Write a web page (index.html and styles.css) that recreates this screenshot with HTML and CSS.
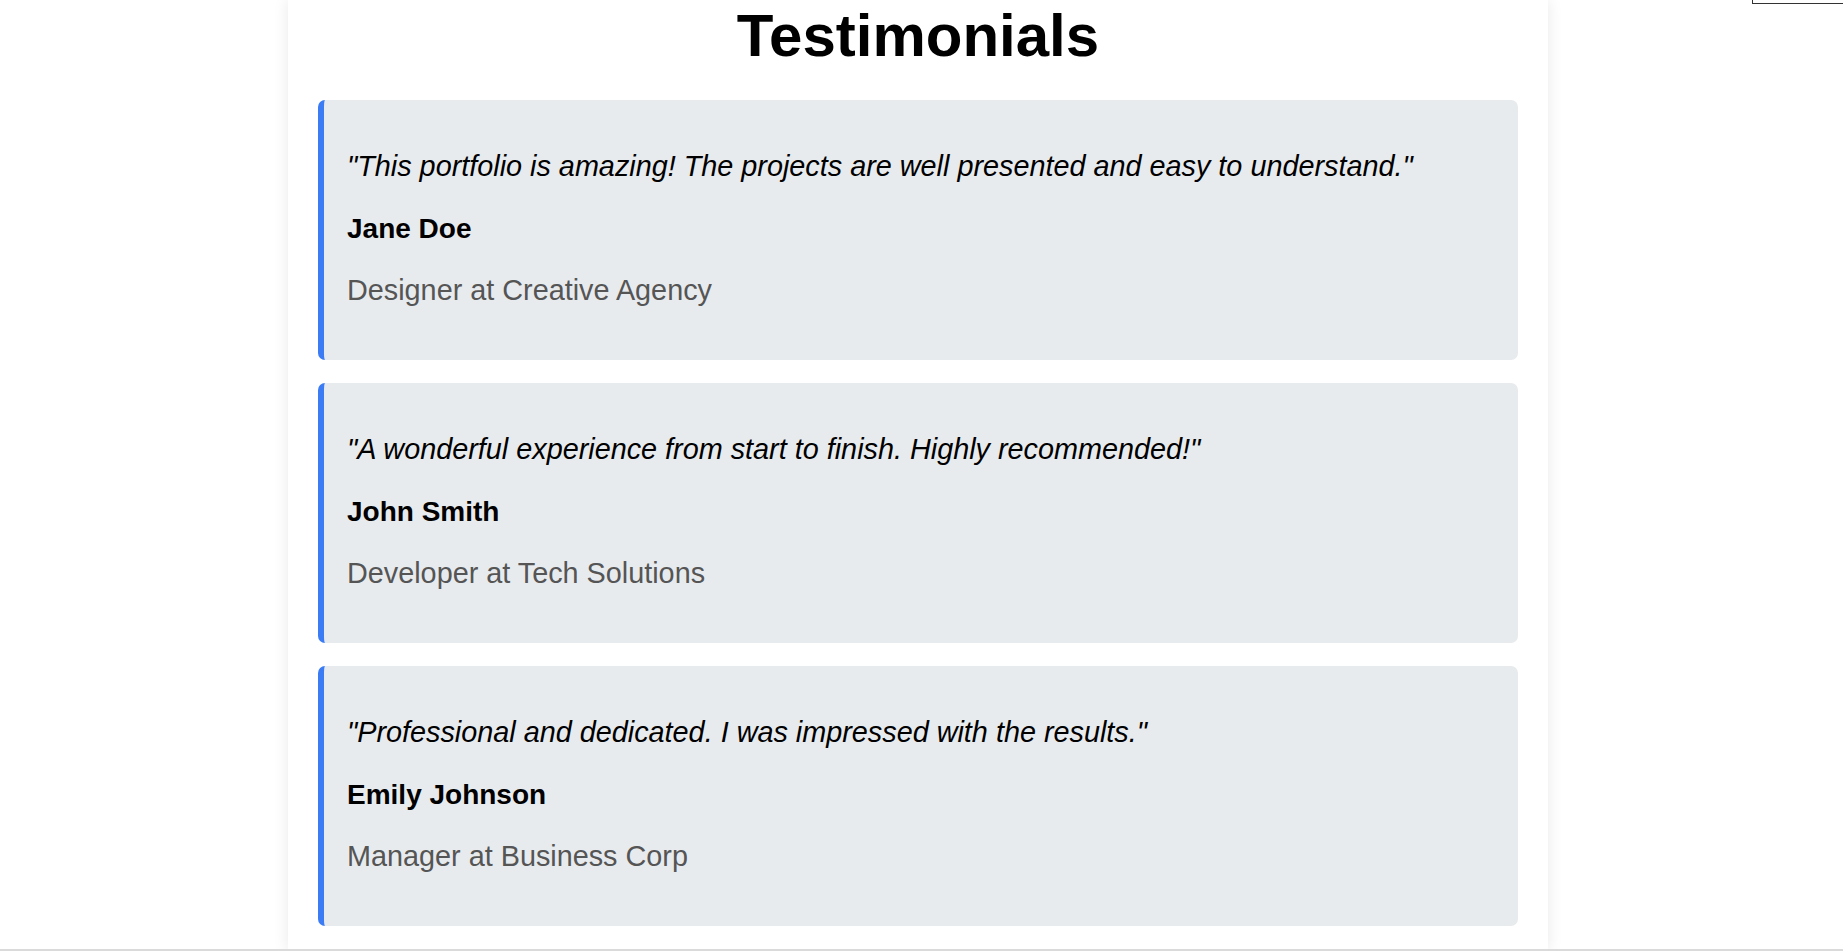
FILE: index.html
```html
<!DOCTYPE html>
<html lang="en">
<head>
<meta charset="utf-8">
<title>Testimonials</title>
<link rel="stylesheet" href="styles.css">
</head>
<body>
  <div class="corner-box"></div>
  <main class="page">
    <section class="testimonials">
      <h2 class="title">Testimonials</h2>
      <div class="list">
        <article class="card">
          <p class="quote">"This portfolio is amazing! The projects are well presented and easy to understand."</p>
          <h4 class="name">Jane Doe</h4>
          <p class="role">Designer at Creative Agency</p>
        </article>
        <article class="card">
          <p class="quote">"A wonderful experience from start to finish. Highly recommended!"</p>
          <h4 class="name">John Smith</h4>
          <p class="role">Developer at Tech Solutions</p>
        </article>
        <article class="card">
          <p class="quote">"Professional and dedicated. I was impressed with the results."</p>
          <h4 class="name">Emily Johnson</h4>
          <p class="role">Manager at Business Corp</p>
        </article>
      </div>
    </section>
  </main>
  <div class="bottom-edge"></div>
</body>
</html>
```

FILE: styles.css
```css
html, body {
  margin: 0;
  padding: 0;
  background: #ffffff;
  overflow: hidden;
}

body {
  padding-right: 7px;
  font-family: "Liberation Sans", Arial, sans-serif;
  color: #000;
  height: 951px;
}

.page {
  width: 1260px;
  height: 951px;
  margin: 0 auto;
  background: #ffffff;
  box-shadow: 0 0 15px rgba(0, 0, 0, 0.09);
  box-sizing: border-box;
  padding: 1px 30px 0;
}

.title {
  margin: 0 0 30px;
  font-size: 60px;
  line-height: 69px;
  font-weight: 700;
  text-align: center;
}

.list {
  display: flex;
  flex-direction: column;
  gap: 23px;
}

.card {
  background: #e8ebee;
  border-left: 6px solid #3b7cf5;
  border-radius: 7px;
  padding: 22px 22px 24px 23px;
}

.quote {
  margin: 28px 0 30px;
  font-size: 28.8px;
  line-height: 33px;
  font-style: italic;
}

.name {
  margin: 0 0 29px;
  font-size: 28px;
  line-height: 32px;
  font-weight: 700;
}

.role {
  margin: 0 0 29px;
  font-size: 28.8px;
  line-height: 33px;
  color: #555555;
}

.corner-box {
  position: fixed;
  top: -30px;
  left: 1752px;
  width: 140px;
  height: 32px;
  border: 1px solid #333;
  background: #fff;
}

.bottom-edge {
  position: fixed;
  left: 0;
  right: 0;
  bottom: 0;
  height: 2px;
  background: #dadada;
}
```
